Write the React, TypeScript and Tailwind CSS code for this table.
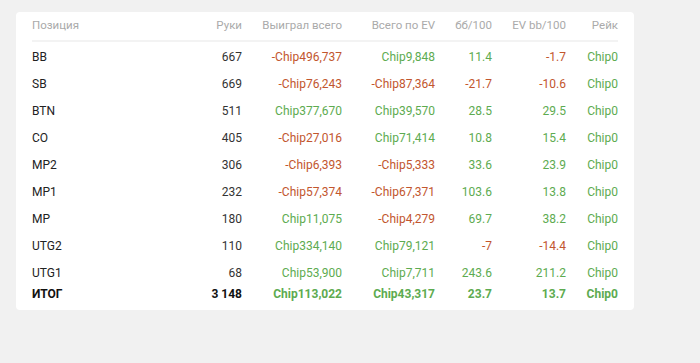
import React from "react";

type Row = {
  pos: string;
  hands: string;
  won: string;
  ev: string;
  bb: string;
  evbb: string;
  rake: string;
};

const rows: Row[] = [
  { pos: "BB", hands: "667", won: "-Chip496,737", ev: "Chip9,848", bb: "11.4", evbb: "-1.7", rake: "Chip0" },
  { pos: "SB", hands: "669", won: "-Chip76,243", ev: "-Chip87,364", bb: "-21.7", evbb: "-10.6", rake: "Chip0" },
  { pos: "BTN", hands: "511", won: "Chip377,670", ev: "Chip39,570", bb: "28.5", evbb: "29.5", rake: "Chip0" },
  { pos: "CO", hands: "405", won: "-Chip27,016", ev: "Chip71,414", bb: "10.8", evbb: "15.4", rake: "Chip0" },
  { pos: "MP2", hands: "306", won: "-Chip6,393", ev: "-Chip5,333", bb: "33.6", evbb: "23.9", rake: "Chip0" },
  { pos: "MP1", hands: "232", won: "-Chip57,374", ev: "-Chip67,371", bb: "103.6", evbb: "13.8", rake: "Chip0" },
  { pos: "MP", hands: "180", won: "Chip11,075", ev: "-Chip4,279", bb: "69.7", evbb: "38.2", rake: "Chip0" },
  { pos: "UTG2", hands: "110", won: "Chip334,140", ev: "Chip79,121", bb: "-7", evbb: "-14.4", rake: "Chip0" },
  { pos: "UTG1", hands: "68", won: "Chip53,900", ev: "Chip7,711", bb: "243.6", evbb: "211.2", rake: "Chip0" },
];

const color = (v: string) => (v.startsWith("-") ? "text-[#c2562e]" : "text-[#5dab50]");

const grid = "grid grid-cols-[1fr_50px_100px_93px_57px_74px_52px] items-center";

export default function App() {
  return (
    <div
      className="w-[700px] h-[363px] bg-[#f1f1f1] pt-[12px] pl-[16px]"
      style={{ fontFamily: "Roboto, 'Liberation Sans', sans-serif" }}
    >
      <div className="w-[618px] bg-white rounded-[4px] px-[16px] pb-[8px] text-[12px]">
        <div className={`${grid} h-[30px] text-[11.5px] text-[#aaaaaa] border-b-2 border-[#f3f3f3]`}>
          <div>Позиция</div>
          <div className="text-right">Руки</div>
          <div className="text-right">Выиграл всего</div>
          <div className="text-right">Всего по EV</div>
          <div className="text-right">бб/100</div>
          <div className="text-right">EV bb/100</div>
          <div className="text-right">Рейк</div>
        </div>
        <div className="pt-[1px]">
          {rows.map((r) => (
            <div key={r.pos} className={`${grid} h-[27px] pt-[1px]`}>
              <div className="text-[#222]">{r.pos}</div>
              <div className="text-right text-[#333]">{r.hands}</div>
              <div className={`text-right ${color(r.won)}`}>{r.won}</div>
              <div className={`text-right ${color(r.ev)}`}>{r.ev}</div>
              <div className={`text-right ${color(r.bb)}`}>{r.bb}</div>
              <div className={`text-right ${color(r.evbb)}`}>{r.evbb}</div>
              <div className={`text-right ${color(r.rake)}`}>{r.rake}</div>
            </div>
          ))}
          <div className={`${grid} h-[17px] font-bold -mt-[1px]`}>
            <div className="text-[#111]">ИТОГ</div>
            <div className="text-right text-[#111]">3 148</div>
            <div className="text-right text-[#5dab50]">Chip113,022</div>
            <div className="text-right text-[#5dab50]">Chip43,317</div>
            <div className="text-right text-[#5dab50]">23.7</div>
            <div className="text-right text-[#5dab50]">13.7</div>
            <div className="text-right text-[#5dab50]">Chip0</div>
          </div>
        </div>
      </div>
    </div>
  );
}
